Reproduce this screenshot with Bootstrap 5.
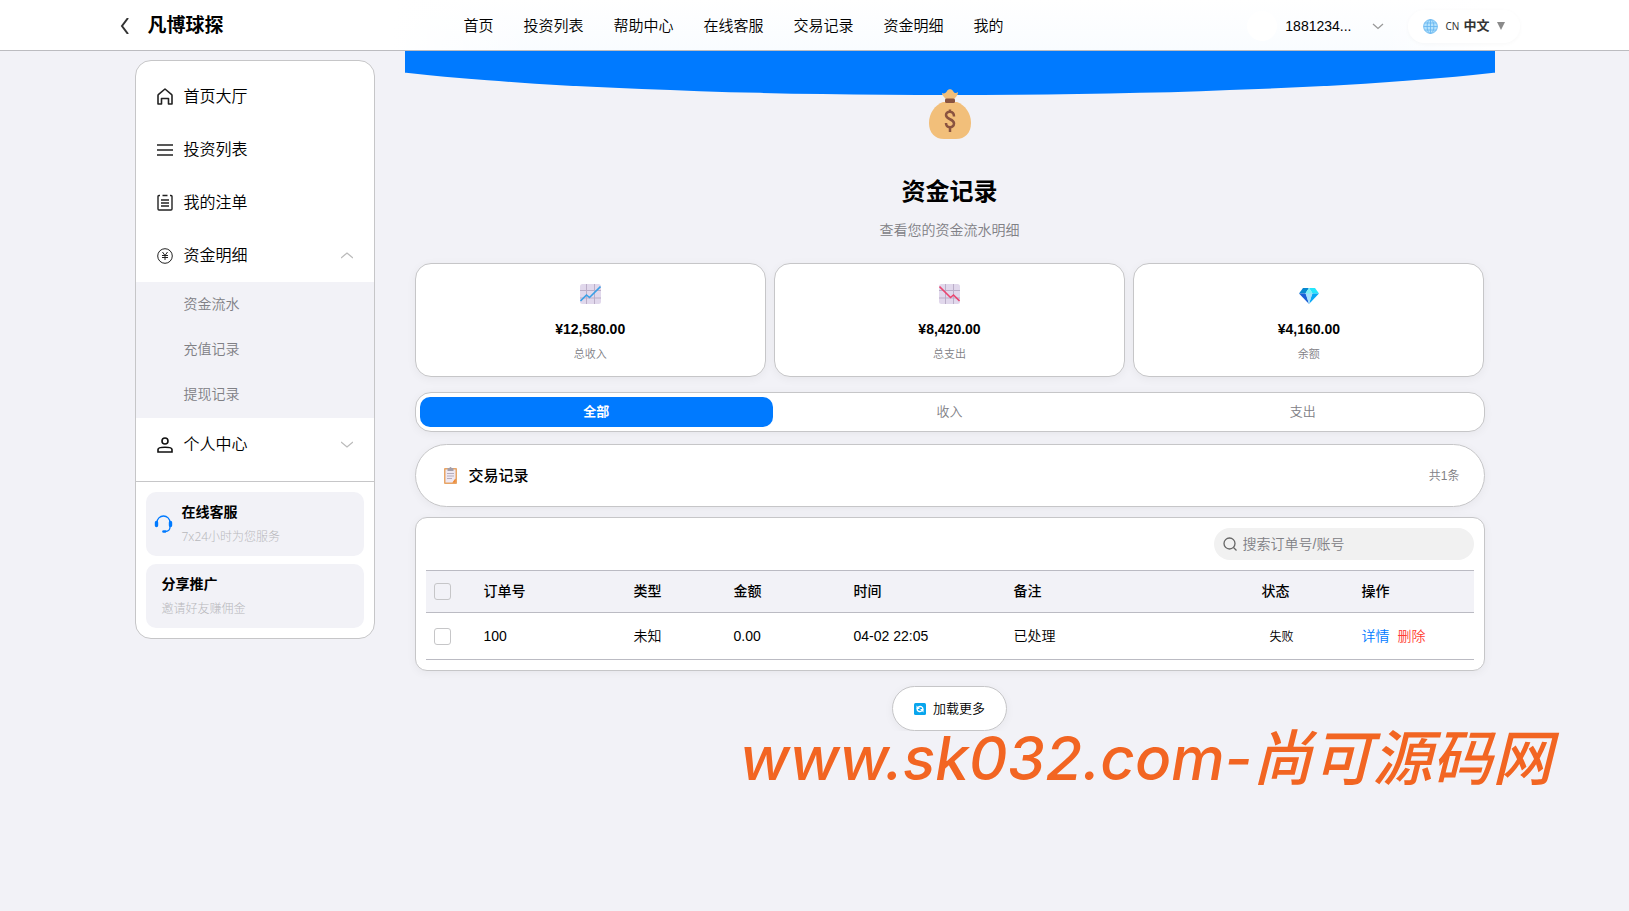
<!DOCTYPE html>
<html lang="zh-CN">
<head>
<meta charset="utf-8">
<meta name="viewport" content="width=device-width, initial-scale=1">
<title>资金记录</title>
<link rel="stylesheet" href="https://cdn.jsdelivr.net/npm/bootstrap@5.3.0/dist/css/bootstrap.min.css">
<style>
:root{--line:#c6c6c8;--page:#f2f2f7;--blue:#007aff;--red:#ff3b30;--grey:#808085}
body{background:var(--page);color:#000;font:350 14px/20px "Liberation Sans","Noto Sans CJK SC",sans-serif}
a{text-decoration:none;color:inherit}
b,strong{font-weight:700}
.topbar{height:51px;background:#fff;border-bottom:1px solid #bcbcc0}
.topbar-inner{max-width:1410px;height:50px;padding-top:2px;background:linear-gradient(90deg,#fff 20%,rgba(255,255,255,0) 30%,rgba(255,255,255,0) 90%,#fff 98%),linear-gradient(#fff,#f9fcff)}
.brand-area{flex:0 0 339px;padding-left:10px;gap:19px}
.brand-area h1{font-size:19px;line-height:24px;font-weight:700}
.main-nav a{font-size:15px;padding:0 15px}
.avatar{width:30px;height:30px}
.lang-pill{width:112px;height:33px;border:0;border-radius:16px;background:#fff;box-shadow:0 1px 4px rgba(0,0,0,.03);padding:0 0 0 15px;color:#333;white-space:nowrap}
.lang-pill small{font:400 10px/16px "Noto Sans",sans-serif}
.lang-pill b{font-size:13px}
.shell{max-width:1360px;gap:30px}
.sidebar{flex:0 0 240px;margin-top:9px;background:#fff;border:1px solid var(--line);border-radius:16px}
.menu{padding:9px 0 10px;border-bottom:1px solid var(--line)}
.menu-row{height:53px;padding:0 21px;font-size:16px;gap:11px;width:100%;border:0;background:none;font-weight:350}
.submenu{background:var(--page);color:var(--grey);padding-bottom:1px}
.submenu a{display:flex;align-items:center;height:45px;padding:0 0 2px 48px}
.side-cards{padding:10px;gap:8px}
.side-tile{background:var(--page);border-radius:10px;height:64px;gap:9px}
.side-tile strong{display:block}
.side-tile .hint{font:300 12px/20px "Noto Sans","Noto Sans CJK SC",sans-serif;color:#b8b8bc;margin-top:5px}
.banner{height:44px;overflow:hidden;position:relative}
.banner::before{content:"";position:absolute;left:-10%;bottom:0;width:120%;height:100px;border-radius:0 0 50% 50%;background:var(--blue)}
.hero{margin-top:-6px;position:relative}
.hero h2{font-size:24px;line-height:32px;font-weight:700;margin:37px 0 12px}
.hero p{color:var(--grey);margin-bottom:23px}
.content-pad{padding:0 10px}
.panel{background:#fff;border:1px solid var(--line);box-shadow:0 2px 10px rgba(0,0,0,.05)}
.stats{gap:8px}
.stat{flex:1;height:114px;border-radius:16px;padding:20px 0}
.stat svg{flex:none}
.stat b{margin-top:15px}
.stat span{font-size:11px;line-height:16px;color:var(--grey);margin-top:7px}
.tabs{margin-top:15px;height:40px;border-radius:16px;padding:4px}
.tabs button{flex:1;border:0;background:none;border-radius:10px;font-size:13px;font-weight:350;color:var(--grey)}
.tabs button.active{background:var(--blue);color:#fff;font-weight:700}
.records-head{margin-top:12px;height:63px;border-radius:32px;padding:0 24px 0 28px}
.records-head h3{font-size:15px;line-height:20px;font-weight:500;gap:12px}
.records-head span{font-size:12px;color:var(--grey)}
.table-card{margin-top:10px;border-radius:12px;padding:10px}
.search-box{width:260px;height:32px;border-radius:16px;background:#f1f1f1;padding:0 9px;gap:6px;margin-bottom:10px}
.search-box input{border:0;background:none;outline:0;min-width:0;flex:1;padding:0;font-weight:350}
.search-box input::placeholder{color:var(--grey)}
.orders{table-layout:fixed;width:100%;border-top:1px solid #bbbbc3}
.orders th,.orders td{padding:0 0 0 10px;border-bottom:1px solid #bbbbc3}
.orders th:first-child,.orders td:first-child{padding:0 0 0 8px}
.orders th{background:var(--page);height:42px;font-weight:500;padding-bottom:2px}
.orders td{height:47px}
.orders .form-check-input{display:block;width:17px;height:17px;margin:0;border:1px solid var(--line);border-radius:3px;background-color:transparent}
.state{font-size:12px;padding:0 8px}
.act-view{color:var(--blue)}
.act-del{color:var(--red)}
.more-btn{margin-top:15px;width:115px;height:45px;border-radius:23px;font-size:13px;font-weight:350;gap:7px}
.site-mark{position:absolute;left:740px;top:712px;font:italic 500 60px/84px Inter,sans-serif;color:#f26522;white-space:nowrap}
.site-mark span{font-family:"Noto Sans CJK SC",sans-serif}
</style>
</head>
<body>
<header class="topbar">
  <div class="topbar-inner mx-auto d-flex align-items-center">
    <div class="brand-area d-flex align-items-center">
      <a href="#" aria-label="返回"><svg class="d-block" width="9" height="16" fill="none" stroke="#333" stroke-width="2"><path d="M8 0 2 8l6 8"/></svg></a>
      <h1 class="m-0">凡博球探</h1>
    </div>
    <nav class="main-nav d-flex">
      <a href="#">首页</a><a href="#">投资列表</a><a href="#">帮助中心</a><a href="#">在线客服</a><a href="#">交易记录</a><a href="#">资金明细</a><a href="#">我的</a>
    </nav>
    <div class="ms-auto d-flex align-items-center">
      <a href="#" class="d-flex align-items-center me-4"><span class="avatar rounded-circle bg-white me-2"></span><span class="me-3">1881234...</span><svg class="ms-1" width="12" height="7" fill="none" stroke="#999" stroke-width="1.3"><path d="m1 1 5 4.500 5-4.500"/></svg></a>
      <button type="button" class="lang-pill d-flex align-items-center">
        <svg width="15" height="15" viewBox="0 0 15 15" fill="#b5e2fc" stroke="#62b4f0" stroke-width=".8"><circle cx="7.500" cy="7.500" r="6.900"/><ellipse cx="7.500" cy="7.500" rx="3.400" ry="6.900"/><path d="M7.500.6v13.800M.6 7.500h13.800M1.500 4h12M1.500 11h12"/></svg>
        <small class="ms-2">CN</small><b class="ms-1">中文</b>
        <svg class="ms-2" width="8" height="8" fill="#8a8a8a"><path d="M0 0h8L4 8z"/></svg>
      </button>
    </div>
  </div>
</header>

<div class="shell mx-auto d-flex align-items-start">
  <aside class="sidebar">
    <nav class="menu">
      <a href="#" class="menu-row d-flex align-items-center"><svg width="16" height="17" fill="none" stroke="#222" stroke-width="1.600"><path d="M1 7.500Q1 6.800 1.600 6.300L8 1l6.400 5.300q.6.500.6 1.200V16h-3.500v-5.500h-7V16H1z" stroke-linejoin="round"/></svg>首页大厅</a>
      <a href="#" class="menu-row d-flex align-items-center"><svg width="16" height="16" stroke="#222" stroke-width="1.600"><path d="M0 3h16M0 8h16M0 13h16"/></svg>投资列表</a>
      <a href="#" class="menu-row d-flex align-items-center"><svg width="16" height="17" fill="none" stroke="#222" stroke-width="1.400"><path d="M3 1.500H2q-1 0-1 1V15q0 1 1 1h12q1 0 1-1V2.500q0-1-1-1h-1M5.500 1.500h5M4 6h8M4 9h8M4 12h8"/></svg>我的注单</a>
      <button type="button" class="menu-row d-flex align-items-center text-black"><svg width="16" height="16" fill="none" stroke="#222"><circle cx="8" cy="8" r="7.300"/><path d="m5.500 4 2.500 3.500L10.500 4M8 7.500V12M5 7.500h6M5 9.500h6"/></svg>资金明细<svg class="ms-auto" width="12" height="7" fill="none" stroke="#bbb" stroke-width="1.300"><path d="m0 6 6-5 6 5"/></svg></button>
      <div class="submenu"><a href="#">资金流水</a><a href="#">充值记录</a><a href="#">提现记录</a></div>
      <button type="button" class="menu-row d-flex align-items-center text-black"><svg width="16" height="16" fill="none" stroke="#111" stroke-width="1.600"><circle cx="8" cy="4" r="3"/><path d="M1 15v-2.500C1 9.500 15 9.500 15 12.500V15z"/></svg>个人中心<svg class="ms-auto" width="12" height="7" fill="none" stroke="#bbb" stroke-width="1.300"><path d="m0 1 6 5 6-5"/></svg></button>
    </nav>
    <div class="side-cards d-flex flex-column">
      <a href="#" class="side-tile d-flex align-items-center px-2"><svg width="19" height="18" fill="none" stroke="#007aff" stroke-width="1.300"><path d="M3 9V7.500a6.500 6.500 0 0 1 13 0V12c0 3-2 4.500-5 4.500"/><path d="M2.500 7.500v3M16.500 7.500v3" stroke-width="3.400" stroke-linecap="round"/><path d="M9.500 16.500h1.500" stroke-width="2.600" stroke-linecap="round"/></svg><span><strong>在线客服</strong><span class="hint d-block">7x24小时为您服务</span></span></a>
      <a href="#" class="side-tile d-flex align-items-center px-3"><span><strong>分享推广</strong><span class="hint d-block">邀请好友赚佣金</span></span></a>
    </div>
  </aside>

  <main class="flex-grow-1">
    <div class="banner"></div>
    <div class="content-pad">
      <section class="hero text-center">
        <svg class="d-block mx-auto" width="42" height="50" viewBox="0 0 42 50"><path d="M13 4c2 1 4 0 5-2 1-2.500 5-2.500 6 0 1 2 3 3 5 1 0 4-3 5-4 8h-8c-1-3-4-4-4-7z" fill="#f2bf7a"/><path d="M14 13C6 16 0 24 0 34c0 10 6 16 15 16h12c9 0 15-6 15-16 0-10-6-18-14-21z" fill="#f2bf7a"/><rect x="16" y="9.500" width="10" height="4.500" rx="1.500" fill="#8a5340"/><path d="M25 27.500c0-6-8-6-8-1.500 0 5 8 3.500 8 8.500 0 5-8 5-8-.5M21 20.500v3.500M21 37.500V43" fill="none" stroke="#8a5340" stroke-width="2.500"/></svg>
        <h2>资金记录</h2>
        <p>查看您的资金流水明细</p>
      </section>

      <section class="stats d-flex">
        <div class="stat panel d-flex flex-column align-items-center">
          <svg width="21" height="20"><rect width="21" height="20" rx="2.500" fill="#e1d8ec"/><path d="M6.500 0v20M14.500 0v20M0 6.500h21M0 14h21" stroke="#bbaec8"/><path d="m.5 17 6-6 3 2.500L20.500 2.500" fill="none" stroke="#3ba0e6" stroke-width="1.600"/></svg>
          <b>¥12,580.00</b><span>总收入</span>
        </div>
        <div class="stat panel d-flex flex-column align-items-center">
          <svg width="21" height="20"><rect width="21" height="20" rx="2.500" fill="#e1d8ec"/><path d="M6.500 0v20M14.500 0v20M0 6.500h21M0 14h21" stroke="#bbaec8"/><path d="m.5 2.500 11 11 3-2.500 6 6" fill="none" stroke="#ea4670" stroke-width="1.600"/></svg>
          <b>¥8,420.00</b><span>总支出</span>
        </div>
        <div class="stat panel d-flex flex-column align-items-center">
          <svg width="20" height="20"><path d="M4 4h6L6.500 9.500H0z" fill="#0788d1"/><path d="M10 4h6l4 5.500h-6.500z" fill="#26e6fb"/><path d="M0 9.500h7L10 20z" fill="#1a5ed6"/><path d="M20 9.500h-7L10 20z" fill="#08a8f5"/><path d="m10 4 3.500 5.500L10 20 6.500 9.500z" fill="#a5dffa"/><path d="m10 4 3.500 5.500h-7z" fill="#7bf2f5"/></svg>
          <b>¥4,160.00</b><span>余额</span>
        </div>
      </section>

      <div class="tabs panel d-flex">
        <button type="button" class="active">全部</button><button type="button">收入</button><button type="button">支出</button>
      </div>

      <div class="records-head panel d-flex align-items-center justify-content-between">
        <h3 class="m-0 d-flex align-items-center"><svg width="13" height="17"><rect y="1" width="13" height="16" rx="1" fill="#e8a566"/><path d="M1.500 2.500h10v9l-3 4h-7z" fill="#eee8f2"/><path d="M11.500 11.500v4h-3z" fill="#f08a35"/><path d="M3.500 1h2a1 1 0 0 1 2 0h2v3h-6z" fill="#a59fa8"/><path d="M3 6.500h7M3 9h7M3 11.500h5" stroke="#b5acbc"/></svg>交易记录</h3>
        <span>共1条</span>
      </div>

      <section class="table-card panel">
        <label class="search-box d-flex align-items-center ms-auto"><svg width="14" height="14" fill="none" stroke="#666" stroke-width="1.300"><circle cx="6.500" cy="6.500" r="5.500"/><path d="m10.500 10.500 3 3"/></svg><input type="text" placeholder="搜索订单号/账号" aria-label="搜索订单号/账号"></label>
        <table class="orders">
          <colgroup><col width="48"><col width="150"><col width="100"><col width="120"><col width="160"><col><col width="100"><col width="122"></colgroup>
          <thead><tr><th><input class="form-check-input" type="checkbox" aria-label="全选"></th><th>订单号</th><th>类型</th><th>金额</th><th>时间</th><th>备注</th><th>状态</th><th>操作</th></tr></thead>
          <tbody><tr><td><input class="form-check-input" type="checkbox" aria-label="选择订单100"></td><td>100</td><td>未知</td><td>0.00</td><td>04-02 22:05</td><td>已处理</td><td><span class="state">失败</span></td><td><a href="#" class="act-view">详情</a><a href="#" class="act-del ms-2">删除</a></td></tr></tbody>
        </table>
      </section>

      <button type="button" class="more-btn panel mx-auto d-flex align-items-center justify-content-center"><svg width="12" height="12"><rect width="12" height="12" rx="1.500" fill="#08a5ed"/><path d="M9 6.500c0-3-3-4-5-2M3 5.500c0 3 3 4 5 2" fill="none" stroke="#fff" stroke-width="1.400"/><path d="M2.500 2.500v3.500H6zM9.500 9.500V6H6z" fill="#fff"/></svg>加载更多</button>
    </div>
  </main>
</div>
<div class="site-mark">www.sk032.com-<span>尚可源码网</span></div>
<script src="https://cdn.jsdelivr.net/npm/bootstrap@5.3.0/dist/js/bootstrap.bundle.min.js"></script>
</body>
</html>
